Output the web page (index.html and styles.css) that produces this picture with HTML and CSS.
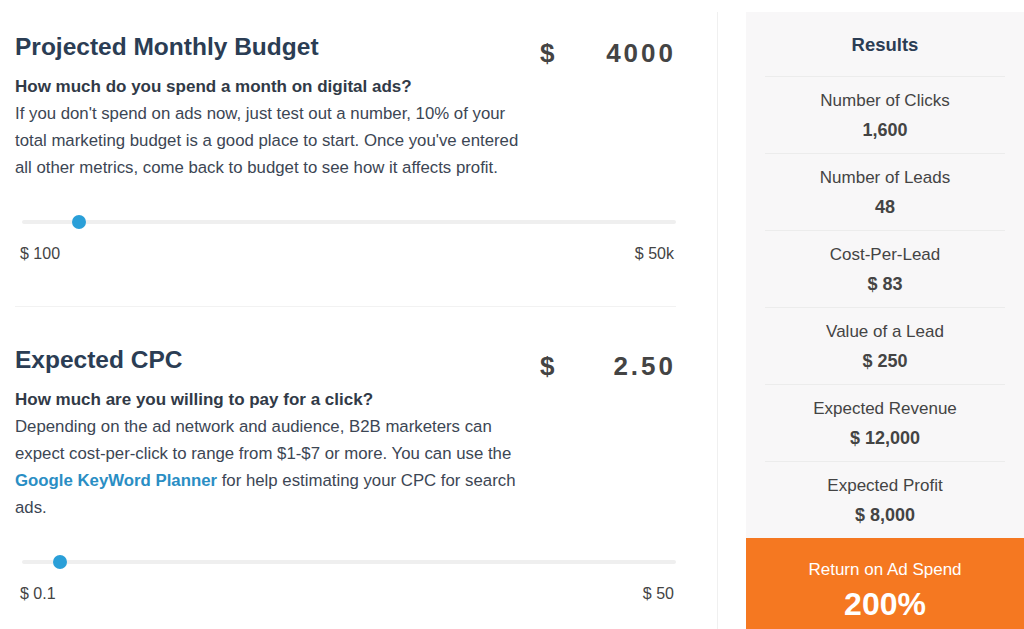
FILE: index.html
```html
<!DOCTYPE html>
<html lang="en">
<head>
    <meta charset="UTF-8">
    <meta name="viewport" content="width=device-width, initial-scale=1.0">
    <title>Ad Spend Calculator</title>
    <link rel="stylesheet" href="styles.css">
</head>
<body>
    <div class="calculator">
        <div class="inputs">
            <div class="field">
                <div class="field-head">
                    <h2 class="field-title">Projected Monthly Budget</h2>
                    <div class="amount">
                        <span class="currency">$</span>
                        <input class="amount-input" type="text" value="4000">
                    </div>
                </div>
                <p class="question">How much do you spend a month on digital ads?</p>
                <p class="hint">If you don't spend on ads now, just test out a number, 10% of your total marketing budget is a good place to start. Once you've entered all other metrics, come back to budget to see how it affects profit.</p>
                <input class="slider" type="range" min="100" max="50000" step="100" value="4000">
                <div class="range-labels">
                    <span>$ 100</span>
                    <span>$ 50k</span>
                </div>
            </div>

            <div class="field">
                <div class="field-head">
                    <h2 class="field-title">Expected CPC</h2>
                    <div class="amount">
                        <span class="currency">$</span>
                        <input class="amount-input" type="text" value="2.50">
                    </div>
                </div>
                <p class="question">How much are you willing to pay for a click?</p>
                <p class="hint">Depending on the ad network and audience, B2B marketers can expect cost-per-click to range from $1-$7 or more. You can use the <a href="#" class="hint-link">Google KeyWord Planner</a> for help estimating your CPC for search ads.</p>
                <input class="slider" type="range" min="0.1" max="50" step="0.1" value="2.5">
                <div class="range-labels">
                    <span>$ 0.1</span>
                    <span>$ 50</span>
                </div>
            </div>
        </div>

        <div class="results">
            <div class="results-list">
                <h3 class="results-title">Results</h3>
                <div class="result">
                    <div class="result-label">Number of Clicks</div>
                    <div class="result-value">1,600</div>
                </div>
                <div class="result">
                    <div class="result-label">Number of Leads</div>
                    <div class="result-value">48</div>
                </div>
                <div class="result">
                    <div class="result-label">Cost-Per-Lead</div>
                    <div class="result-value">$ 83</div>
                </div>
                <div class="result">
                    <div class="result-label">Value of a Lead</div>
                    <div class="result-value">$ 250</div>
                </div>
                <div class="result">
                    <div class="result-label">Expected Revenue</div>
                    <div class="result-value">$ 12,000</div>
                </div>
                <div class="result">
                    <div class="result-label">Expected Profit</div>
                    <div class="result-value">$ 8,000</div>
                </div>
            </div>
            <div class="roas">
                <div class="roas-label">Return on Ad Spend</div>
                <div class="roas-value">200%</div>
            </div>
        </div>
    </div>
</body>
</html>
```

FILE: styles.css
```css
:root {
    --navy: #2b3d54;
    --text: #3c4654;
    --grey-text: #444444;
    --blue: #2a9fd8;
    --link: #2a8ec4;
    --orange: #f57821;
    --panel: #f8f7f8;
    --line: #f0f0f0;
}

body, html {
    margin: 0;
    padding: 0;
    height: 100%;
    font-family: Arial, 'Liberation Sans', sans-serif;
    background: #ffffff;
    overflow: hidden;
}

.calculator {
    display: flex;
    align-items: stretch;
    height: 100%;
    padding-top: 12px;
    box-sizing: border-box;
}

.inputs {
    width: 661px;
    margin-left: 15px;
    padding-right: 41px;
    border-right: 1px solid var(--line);
}

.field {
    padding: 38px 0 42px;
}

.field:first-child {
    padding-top: 20px;
}

.field + .field {
    border-top: 1px solid #f2f2f2;
}

.field-head {
    display: flex;
    justify-content: space-between;
    align-items: flex-start;
}

.field-title {
    margin: 0;
    font-size: 24.5px;
    line-height: 30px;
    font-weight: bold;
    color: var(--navy);
}

.amount {
    display: flex;
    align-items: center;
    width: 136px;
    margin-top: 6px;
    color: var(--grey-text);
    font-size: 26px;
    line-height: 30px;
    font-weight: bold;
}

.amount-input {
    flex: 1;
    min-width: 0;
    padding: 0;
    border: none;
    background: transparent;
    font-family: inherit;
    font-size: 26px;
    line-height: 30px;
    font-weight: bold;
    color: var(--grey-text);
    text-align: right;
    letter-spacing: 3px;
    outline: none;
}

.question {
    margin: 5px 0 0;
    font-size: 17px;
    line-height: 27px;
    font-weight: bold;
    color: #313a47;
}

.hint {
    margin: 0;
    width: 515px;
    font-size: 16.8px;
    line-height: 27px;
    color: var(--text);
}

.hint-link {
    color: var(--link);
    font-weight: bold;
    text-decoration: none;
}

.slider {
    -webkit-appearance: none;
    appearance: none;
    display: block;
    width: 654px;
    height: 16px;
    margin: 33px 0 0 7px;
    padding: 0;
    background: transparent;
}

.slider::-webkit-slider-runnable-track {
    height: 4px;
    background: #efefef;
    border-radius: 2px;
}

.slider::-webkit-slider-thumb {
    -webkit-appearance: none;
    width: 14px;
    height: 14px;
    margin-top: -5px;
    border: none;
    border-radius: 50%;
    background: var(--blue);
}

.slider::-moz-range-track {
    height: 4px;
    background: #efefef;
    border-radius: 2px;
}

.slider::-moz-range-thumb {
    width: 14px;
    height: 14px;
    border: none;
    border-radius: 50%;
    background: var(--blue);
}

.range-labels {
    display: flex;
    justify-content: space-between;
    margin: 14px 2px 0 5px;
    font-size: 16px;
    line-height: 20px;
    color: var(--grey-text);
}

.results {
    width: 278px;
    margin-left: 28px;
    background: var(--panel);
    display: flex;
    flex-direction: column;
}

.results-list {
    padding: 0 19px;
}

.results-title {
    margin: 0;
    padding: 21px 0 20px;
    font-size: 18.5px;
    line-height: 23px;
    font-weight: bold;
    color: var(--navy);
    text-align: center;
    border-bottom: 1px solid #ececec;
}

.result {
    padding: 13px 0 11px;
    text-align: center;
    border-bottom: 1px solid #ececec;
}

.result:last-child {
    border-bottom: none;
}

.result-label {
    font-size: 17px;
    line-height: 22px;
    color: var(--grey-text);
}

.result-value {
    margin-top: 6px;
    font-size: 18px;
    line-height: 24px;
    font-weight: bold;
    color: var(--grey-text);
}

.roas {
    flex: 1;
    padding-top: 22px;
    background: var(--orange);
    color: #ffffff;
    text-align: center;
}

.roas-label {
    font-size: 17px;
    line-height: 20px;
}

.roas-value {
    margin-top: 6px;
    font-size: 32px;
    line-height: 36px;
    font-weight: bold;
}
```
